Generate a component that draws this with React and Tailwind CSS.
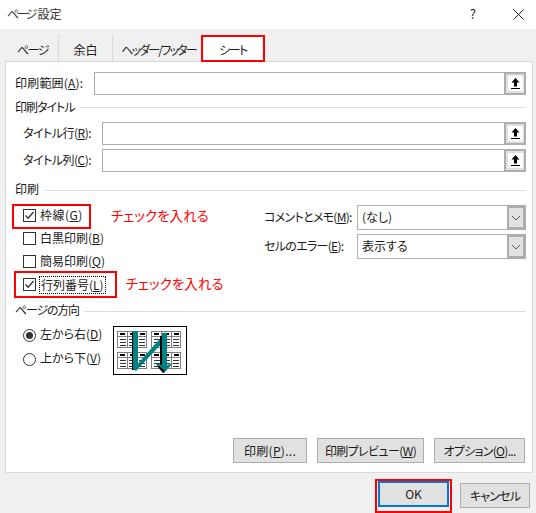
const font = "[font-family:'Noto_Sans_CJK_JP','Noto_Sans_CJK_JP',sans-serif]"

function Hot({ children }) {
  return <span className="underline">{children}</span>
}

function RefButton() {
  return (
    <div className="w-[22px] h-[23px] shrink-0 border-2 border-[#adadad] bg-[#e1e1e1] flex items-center justify-center">
      <div className="w-[15px] h-[15px] bg-white flex items-center justify-center">
        <svg width="11" height="13" viewBox="0 0 11 13">
          <path d="M5.5 1 L9.5 5.5 L7 5.5 L7 9.5 L4 9.5 L4 5.5 L1.5 5.5 Z" fill="#000" />
          <rect x="1" y="11" width="9" height="1" fill="#000" />
        </svg>
      </div>
    </div>
  )
}

function RefRow({ label, hot, labelWidth, className = '', labelClass = '' }) {
  return (
    <div className={`flex items-center ${className}`}>
      <span className={`shrink-0 whitespace-nowrap pb-[2px] ${labelClass}`} style={{ width: labelWidth }}>{label}(<Hot>{hot}</Hot>):</span>
      <div className="flex-1 h-[23px] border border-[#adadad] border-r-0 bg-white" />
      <RefButton />
    </div>
  )
}

function GroupTitle({ children, className = '', textClass = '' }) {
  return (
    <div className={`flex items-center gap-[5px] h-[20px] ${className}`}>
      <span className={textClass}>{children}</span>
      <div className="flex-1 h-px bg-[#dcdcdc]" />
    </div>
  )
}

function Check({ checked }) {
  return (
    <div className="w-[13px] h-[13px] border border-[#333333] bg-white shrink-0 flex items-center justify-center">
      {checked && (
        <svg width="11" height="11" viewBox="0 0 11 11">
          <path d="M1.5 5.5 L4.2 8.2 L9.5 2" fill="none" stroke="#333333" strokeWidth="1.3" />
        </svg>
      )}
    </div>
  )
}

function Radio({ checked }) {
  return (
    <div className="w-[13px] h-[13px] rounded-full border border-[#333333] bg-white shrink-0 flex items-center justify-center">
      {checked && <div className="w-[7px] h-[7px] rounded-full bg-[#333333]" />}
    </div>
  )
}

function Select({ value }) {
  return (
    <div className="h-[25px] border border-[#adadad] bg-white flex items-center pl-[4px]">
      <span className="flex-1 pb-[2px]">{value}</span>
      <div className="w-[18px] h-[23px] border-2 border-[#adadad] border-r-[2px] bg-[#e1e1e1] flex items-center justify-center">
        <svg width="10" height="6" viewBox="0 0 10 6">
          <path d="M1 1 L5 5 L9 1" fill="none" stroke="#555555" strokeWidth="1" />
        </svg>
      </div>
    </div>
  )
}

function Btn({ children, className = '' }) {
  return (
    <button className={`h-[25px] border border-[#adadad] bg-[#e1e1e1] flex items-center justify-center whitespace-nowrap ${className}`}>
      {children}
    </button>
  )
}

function MiniSheet({ x, y }) {
  return (
    <g transform={`translate(${x} ${y})`}>
      <rect x="0.5" y="0.5" width="29" height="16" fill="#fff" stroke="#808080" />
      <rect x="0" y="5" width="30" height="1" fill="#808080" />
      <rect x="10" y="0" width="1" height="17" fill="#808080" />
      <rect x="20" y="0" width="1" height="17" fill="#808080" />
      <rect x="3" y="2" width="5" height="2" fill="#000" />
      <rect x="13" y="2" width="5" height="2" fill="#000" />
      <rect x="23" y="2" width="5" height="2" fill="#000" />
      {[8, 11, 14].map((ly) => (
        <g key={ly}>
          <rect x="3" y={ly} width="6" height="1" fill="#333" />
          <rect x="12" y={ly} width="7" height="1" fill="#333" />
          <rect x="22" y={ly} width="6" height="1" fill="#333" />
        </g>
      ))}
    </g>
  )
}

function PageOrder() {
  return (
    <svg width="74" height="49" viewBox="0 0 74 49" className="shrink-0 mt-[3px]">
      <rect x="0.5" y="0.5" width="73" height="48" fill="#fff" stroke="#000" />
      <MiniSheet x={4} y={5} />
      <MiniSheet x={38} y={5} />
      <MiniSheet x={4} y={26} />
      <MiniSheet x={38} y={26} />
      <rect x="19" y="6" width="2" height="38" fill="#000" />
      <rect x="20" y="5" width="5" height="38" fill="#008080" />
      <path d="M20 43 L53 6 L53 13 L23 45 Z" fill="#008080" />
      <rect x="47" y="10" width="2" height="32" fill="#000" />
      <rect x="49" y="7" width="5" height="32" fill="#008080" />
      <path d="M42 37 L51 47 L60 37 L54 39 L49 39 Z" fill="#008080" />
      <path d="M44 40 L50 47 L52 45 L46 40 Z" fill="#000" />
    </svg>
  )
}

export default function App() {
  return (
    <div className={`w-[536px] h-[513px] bg-[#f0f0f0] flex flex-col text-[12px] leading-[16px] text-[#1a1a1a] [font-feature-settings:'palt'] ${font}`}>
      {/* title bar */}
      <div className="h-[29px] bg-white flex items-center pl-[7px]">
        <span className="flex-1 text-[#333333] pb-[2px]"><span className="tracking-[-2.7px] mr-[3px]">ページ</span>設定</span>
        <span className="mr-[37px] text-[13px] pb-[2px]">?</span>
        <svg width="11" height="11" viewBox="0 0 11 11" className="mr-[12px]">
          <path d="M0.5 0.5 L10.5 10.5 M10.5 0.5 L0.5 10.5" stroke="#222" strokeWidth="1" />
        </svg>
      </div>

      {/* tabs */}
      <div className="flex h-[32px] pt-[6px] pl-[7px] items-stretch">
        <div className="w-[52px] pt-[3px] border-r border-[#d9d9d9] flex items-center justify-center tracking-[-1.5px]">ページ</div>
        <div className="w-[54px] pt-[3px] border-r border-[#d9d9d9] flex items-center justify-center">余白</div>
        <div className="w-[91px] pt-[3px] flex items-center justify-center tracking-[-1.8px] whitespace-nowrap">ヘッダー/フッター</div>
        <div className="relative w-[58px] pt-[3px] bg-white flex items-center justify-center z-10 -mb-px tracking-[-1.5px]">
          シート
          <div className="absolute -left-[3px] -right-[3px] top-0 bottom-0 border-[2px] border-[#ff0000]" />
        </div>
      </div>

      {/* sheet panel */}
      <div className="mx-[5px] w-[528px] h-[412px] border border-[#d9d9d9] bg-white flex flex-col pl-[9px] pr-[6px] pt-[10px] pb-[9px]">
        <RefRow label="印刷範囲" hot="A" labelWidth={79} labelClass="tracking-[0.2px]" />
        <GroupTitle className="!h-[24px]" textClass="tracking-[-1px]">印刷タイトル</GroupTitle>
        <RefRow label="タイトル行" hot="R" labelWidth={79} labelClass="tracking-[-0.5px]" className="pl-[8px] mt-[3px]" />
        <RefRow label="タイトル列" hot="C" labelWidth={79} labelClass="tracking-[-0.5px]" className="pl-[8px] mt-[4px]" />
        <GroupTitle className="mt-[8px]" textClass="pb-[2px]">印刷</GroupTitle>

        <div className="flex mt-[4px]">
          <div className="w-[249px] pl-[8px]">
            <div className="relative flex items-center h-[23px] gap-[4px]">
              <Check checked />
              <span className="tracking-[0.5px] pb-[2px]">枠線(<Hot>G</Hot>)</span>
              <span className="ml-[24px] text-[13.5px] text-[#ff0000] whitespace-nowrap pb-[2px]">チェックを入れる</span>
              <div className="absolute -left-[11px] top-0 w-[79px] h-[25px] border-[2px] border-[#ff0000]" />
            </div>
            <div className="flex items-center h-[23px] gap-[4px]">
              <Check />
              <span className="pb-[2px]">白黒印刷(<Hot>B</Hot>)</span>
            </div>
            <div className="flex items-center h-[23px] gap-[4px]">
              <Check />
              <span className="pb-[2px]">簡易印刷(<Hot>Q</Hot>)</span>
            </div>
            <div className="relative flex items-center h-[23px] gap-[3px]">
              <Check checked />
              <span className="border border-dotted border-black px-px h-[18px] flex items-center">
                <span>行列番号(<Hot>L</Hot>)</span>
              </span>
              <span className="ml-[17px] text-[13.5px] text-[#ff0000] whitespace-nowrap pb-[4px]">チェックを入れる</span>
              <div className="absolute -left-[9px] -top-[2px] w-[103px] h-[27px] border-[2px] border-[#ff0000]" />
            </div>
          </div>
          <div className="flex-1 mt-px">
            <div className="flex items-center">
              <span className="w-[93px] shrink-0 whitespace-nowrap tracking-[-0.7px] pb-[2px]">コメントとメモ(<Hot>M</Hot>):</span>
              <div className="flex-1"><Select value="(なし)" /></div>
            </div>
            <div className="flex items-center mt-[4px]">
              <span className="w-[93px] shrink-0 whitespace-nowrap tracking-[-0.7px] pb-[2px]">セルのエラー(<Hot>E</Hot>):</span>
              <div className="flex-1"><Select value="表示する" /></div>
            </div>
          </div>
        </div>

        <GroupTitle className="mt-[5px]" textClass="tracking-[-1.2px] pb-[2px]">ページの方向</GroupTitle>
        <div className="flex pl-[8px] mt-[2px]">
          <div className="w-[90px]">
            <div className="flex items-center h-[24px] gap-[4px]">
              <Radio checked />
              <span className="pb-[2px]">左から右(<Hot>D</Hot>)</span>
            </div>
            <div className="flex items-center h-[24px] gap-[4px]">
              <Radio />
              <span className="pb-[2px]">上から下(<Hot>V</Hot>)</span>
            </div>
          </div>
          <PageOrder />
        </div>

        <div className="mt-auto flex justify-end gap-[10px] pr-px">
          <Btn className="w-[74px]"><span className="tracking-[0.3px]">印刷(<Hot>P</Hot>)...</span></Btn>
          <Btn className="w-[107px]"><span className="tracking-[-0.6px]">印刷プレビュー(<Hot>W</Hot>)</span></Btn>
          <Btn className="w-[91px]"><span className="tracking-[-0.7px]">オプション(<Hot>O</Hot>)...</span></Btn>
        </div>
      </div>

      {/* footer */}
      <div className="flex justify-end pt-[8px] pr-[6px] gap-[11px]">
        <div className="relative">
          <Btn className="w-[71px] !h-[26px] border-[2px] !border-[#0078d7]">OK</Btn>
          <div className="absolute -left-[3px] -right-[3px] -top-[2px] -bottom-[5px] border-[2px] border-[#ff0000]" />
        </div>
        <Btn className="w-[70px] mt-[2px] tracking-[-0.8px]">キャンセル</Btn>
      </div>
    </div>
  )
}
